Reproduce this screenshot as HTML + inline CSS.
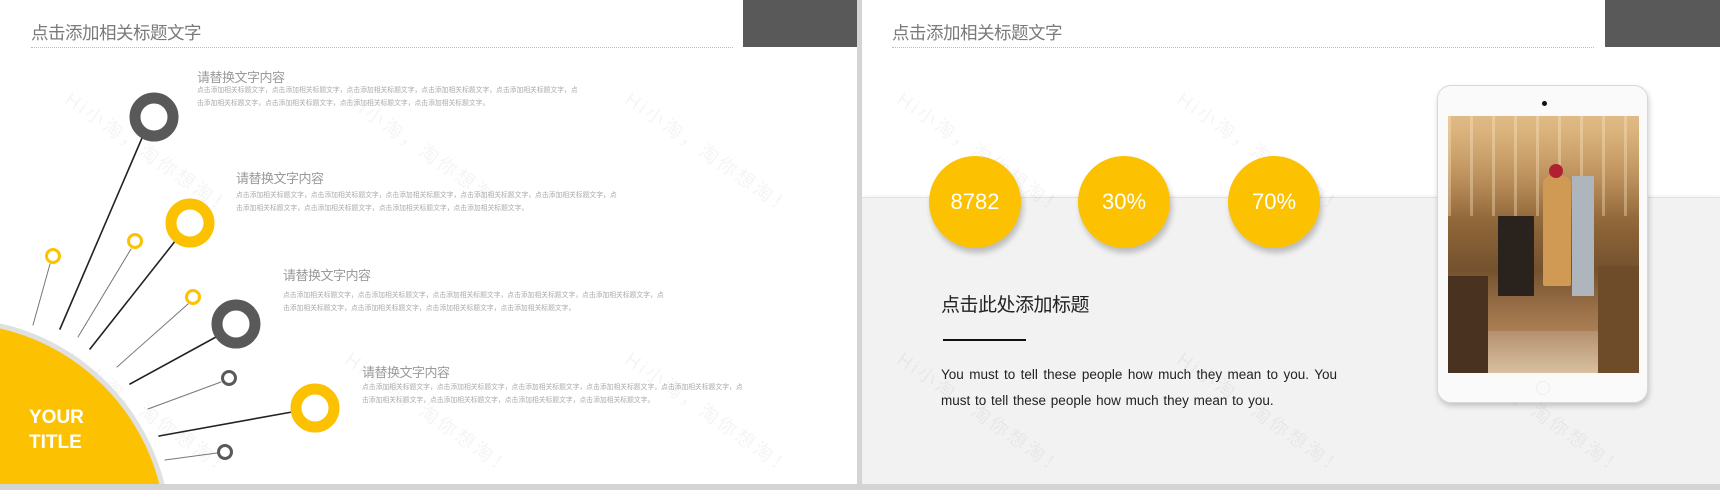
<!DOCTYPE html>
<html><head><meta charset="utf-8"><style>
*{margin:0;padding:0;box-sizing:border-box}
html,body{width:1720px;height:490px;overflow:hidden}
body{background:#d4d4d4;font-family:"Liberation Sans","Noto Sans CJK SC",sans-serif;position:relative}
.s{position:absolute;top:0;height:484px;background:#fff;overflow:hidden}
.ttl{position:absolute;left:31px;top:20px;font-size:17.5px;color:#7a7a7a;letter-spacing:-0.5px}
.dot{position:absolute;left:31px;top:47px;height:0;border-top:1px dotted #bbb}
.gr{position:absolute;top:0;height:47px;background:#595959}
.h{position:absolute;font-size:13px;color:#9a9a9a;letter-spacing:-0.5px}
.b{position:absolute;font-size:6.8px;line-height:13px;color:#aaa;white-space:nowrap}
.wm{position:absolute;font-size:19px;color:rgba(0,0,0,0.045);transform:rotate(35deg);white-space:nowrap;letter-spacing:3px}
.c{position:absolute;width:92px;height:92px;border-radius:50%;background:#fcc100;color:#fff;font-size:22px;text-align:center;line-height:92px;box-shadow:2px 5px 6px rgba(0,0,0,0.22)}
</style></head><body>
<div class="s" style="left:0;width:857px">
  <div class="ttl">点击添加相关标题文字</div>
  <div class="dot" style="width:702px"></div>
  <div class="gr" style="left:743px;width:114px"></div>
  <div class="wm" style="left:50px;top:140px">Hi小淘，淘你想淘！</div>
  <div class="wm" style="left:330px;top:140px">Hi小淘，淘你想淘！</div>
  <div class="wm" style="left:610px;top:140px">Hi小淘，淘你想淘！</div>
  <div class="wm" style="left:50px;top:400px">Hi小淘，淘你想淘！</div>
  <div class="wm" style="left:330px;top:400px">Hi小淘，淘你想淘！</div>
  <div class="wm" style="left:610px;top:400px">Hi小淘，淘你想淘！</div>
  <svg width="857" height="484" style="position:absolute;left:0;top:0">
    <circle cx="-48" cy="537" r="219" fill="#e0e0e0"/>
    <circle cx="-48" cy="537" r="214" fill="#fcc100"/>
    <g stroke-linecap="round">
      <line x1="33" y1="325" x2="50" y2="264" stroke="#777" stroke-width="1"/>
      <line x1="60" y1="329" x2="142" y2="138" stroke="#222" stroke-width="1.6"/>
      <line x1="78" y1="337" x2="131" y2="249" stroke="#777" stroke-width="1"/>
      <line x1="90" y1="349" x2="176" y2="240" stroke="#222" stroke-width="1.6"/>
      <line x1="117" y1="367" x2="188" y2="304" stroke="#777" stroke-width="1"/>
      <line x1="130" y1="384" x2="216" y2="337" stroke="#222" stroke-width="1.6"/>
      <line x1="148" y1="409" x2="221" y2="382" stroke="#777" stroke-width="1"/>
      <line x1="159" y1="436" x2="292" y2="412" stroke="#222" stroke-width="1.6"/>
      <line x1="165" y1="460" x2="217" y2="453" stroke="#777" stroke-width="1"/>
    </g>
    <g fill="none">
      <circle cx="154" cy="117" r="19" stroke="#595959" stroke-width="11"/>
      <circle cx="190" cy="223" r="19" stroke="#fcc100" stroke-width="11"/>
      <circle cx="236" cy="324" r="19" stroke="#595959" stroke-width="11"/>
      <circle cx="315" cy="408" r="19" stroke="#fcc100" stroke-width="11"/>
      <circle cx="53" cy="256" r="6.5" stroke="#fcc100" stroke-width="3"/>
      <circle cx="135" cy="241" r="6.5" stroke="#fcc100" stroke-width="3"/>
      <circle cx="193" cy="297" r="6.5" stroke="#fcc100" stroke-width="3"/>
      <circle cx="229" cy="378" r="6.5" stroke="#595959" stroke-width="3"/>
      <circle cx="225" cy="452" r="6.5" stroke="#595959" stroke-width="3"/>
    </g>
  </svg>
  <div style="position:absolute;left:29px;top:405px;color:#fff;font-weight:bold;font-size:19px;line-height:25px">YOUR<br>TITLE</div>
  <div class="h" style="left:197px;top:67px">请替换文字内容</div>
  <div class="b" style="left:197px;top:84px">点击添加相关标题文字，点击添加相关标题文字，点击添加相关标题文字，点击添加相关标题文字，点击添加相关标题文字，点<br>击添加相关标题文字，点击添加相关标题文字，点击添加相关标题文字，点击添加相关标题文字。</div>
  <div class="h" style="left:236px;top:168px">请替换文字内容</div>
  <div class="b" style="left:236px;top:189px">点击添加相关标题文字，点击添加相关标题文字，点击添加相关标题文字，点击添加相关标题文字，点击添加相关标题文字，点<br>击添加相关标题文字，点击添加相关标题文字，点击添加相关标题文字，点击添加相关标题文字。</div>
  <div class="h" style="left:283px;top:265px">请替换文字内容</div>
  <div class="b" style="left:283px;top:289px">点击添加相关标题文字，点击添加相关标题文字，点击添加相关标题文字，点击添加相关标题文字，点击添加相关标题文字，点<br>击添加相关标题文字，点击添加相关标题文字，点击添加相关标题文字，点击添加相关标题文字。</div>
  <div class="h" style="left:362px;top:362px">请替换文字内容</div>
  <div class="b" style="left:362px;top:381px">点击添加相关标题文字，点击添加相关标题文字，点击添加相关标题文字，点击添加相关标题文字，点击添加相关标题文字，点<br>击添加相关标题文字，点击添加相关标题文字，点击添加相关标题文字，点击添加相关标题文字。</div>
</div>
<div class="s" style="left:862px;width:858px">
  <div style="position:absolute;left:0;top:197px;width:858px;height:290px;background:#f2f2f2;border-top:1px solid #e2e2e2;box-shadow:0 -1px 3px rgba(0,0,0,0.06)"></div>
  <div class="ttl" style="left:30px">点击添加相关标题文字</div>
  <div class="dot" style="left:30px;width:702px"></div>
  <div class="gr" style="left:743px;width:115px"></div>
  <div class="wm" style="left:20px;top:140px">Hi小淘，淘你想淘！</div>
  <div class="wm" style="left:300px;top:140px">Hi小淘，淘你想淘！</div>
  <div class="wm" style="left:580px;top:140px">Hi小淘，淘你想淘！</div>
  <div class="wm" style="left:20px;top:400px">Hi小淘，淘你想淘！</div>
  <div class="wm" style="left:300px;top:400px">Hi小淘，淘你想淘！</div>
  <div class="wm" style="left:580px;top:400px">Hi小淘，淘你想淘！</div>
  <div class="c" style="left:67px;top:156px">8782</div>
  <div class="c" style="left:216px;top:156px">30%</div>
  <div class="c" style="left:366px;top:156px">70%</div>
  <div style="position:absolute;left:79px;top:290px;font-size:19px;color:#222;letter-spacing:-0.5px">点击此处添加标题</div>
  <div style="position:absolute;left:81px;top:339px;width:83px;height:2px;background:#111"></div>
  <div style="position:absolute;left:79px;top:362px;width:396px;font-size:13.5px;line-height:26px;color:#222;text-align:justify;word-spacing:1px">You must to tell these people how much they mean to you. You must to tell these people how much they mean to you.</div>
  <div style="position:absolute;left:575px;top:85px;width:211px;height:318px;background:#fafafa;border:1px solid #d8d8d8;border-radius:14px;box-shadow:1px 3px 6px rgba(0,0,0,0.2)">
    <div style="position:absolute;left:104px;top:15px;width:5px;height:5px;border-radius:50%;background:#111"></div>
    <div style="position:absolute;left:10px;top:30px;width:191px;height:257px;overflow:hidden;background:linear-gradient(180deg,#d1a46a 0%,#b58650 20%,#8a6236 45%,#74522f 60%,#9a7048 75%,#c89a68 100%)">
      <div style="position:absolute;left:0;top:0;width:191px;height:100px;background:repeating-linear-gradient(90deg,rgba(255,235,200,0.35) 0 3px,transparent 3px 22px),linear-gradient(180deg,rgba(240,210,160,0.5),transparent)"></div>
      <div style="position:absolute;left:95px;top:60px;width:28px;height:110px;background:#d09a55;border-radius:8px 8px 2px 2px"></div>
      <div style="position:absolute;left:101px;top:48px;width:14px;height:14px;background:#b02030;border-radius:50%"></div>
      <div style="position:absolute;left:124px;top:60px;width:22px;height:120px;background:#aeb5bd"></div>
      <div style="position:absolute;left:50px;top:100px;width:36px;height:80px;background:#2a221d"></div>
      <div style="position:absolute;left:0;top:160px;width:40px;height:97px;background:#4a3220"></div>
      <div style="position:absolute;left:150px;top:150px;width:41px;height:107px;background:#6e4c2a"></div>
      <div style="position:absolute;left:40px;top:215px;width:110px;height:42px;background:linear-gradient(180deg,#b49070,#d8c0a0)"></div>
    </div>
    <div style="position:absolute;left:98px;top:295px;width:14px;height:14px;border-radius:50%;border:1px solid #eee"></div>
  </div>
</div>
</body></html>
